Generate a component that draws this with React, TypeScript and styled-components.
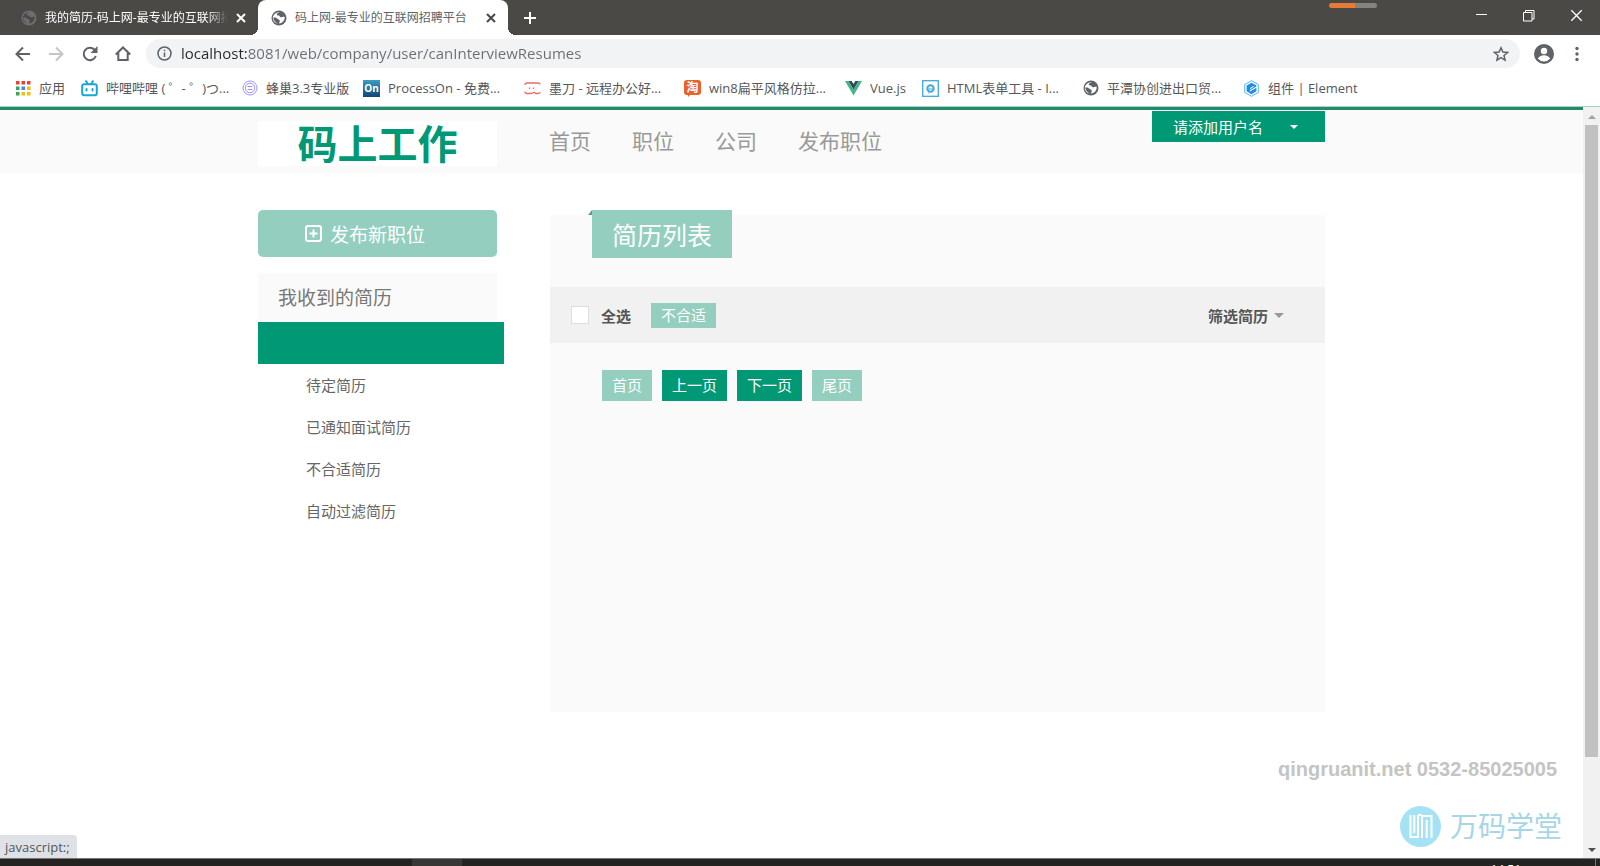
import React from 'react';
import styled, { createGlobalStyle } from 'styled-components';

const cjk = '"Open Sans", "Noto Sans CJK SC", sans-serif';
const green = '#019875';
const mint = '#93cebf';

const Global = createGlobalStyle`
  * { box-sizing: border-box; }
  html, body, #root { height: 100%; }
  body { margin: 0; font-family: ${cjk}; color: #555; background: #fff; }
  button { font: inherit; border: 0; padding: 0; background: none; color: inherit; cursor: pointer; }
  a { color: inherit; text-decoration: none; }
  h1, h2, ul { margin: 0; padding: 0; font-weight: 400; list-style: none; }
`;

const Screen = styled.div`
  display: flex;
  flex-direction: column;
  min-height: 100vh;
  position: relative;
`;
const TabStrip = styled.div`
  display: flex;
  align-items: stretch;
  height: 35px;
  background: #4b4946;
  color: #fff;
  padding-left: 8px;
`;
const Tab = styled.div<{ $active?: boolean }>`
  position: relative;
  display: flex;
  align-items: center;
  gap: 8px;
  width: 250px;
  padding: 0 12px 0 13px;
  font-size: 12px;
  line-height: 18px;
  color: ${(p) => (p.$active ? '#5f6368' : '#fff')};
  background: ${(p) => (p.$active ? '#fff' : 'transparent')};
  border-radius: 8px 8px 0 0;
  &::before, &::after {
    content: '';
    display: ${(p) => (p.$active ? 'block' : 'none')};
    position: absolute;
    bottom: 0;
    width: 8px;
    height: 8px;
  }
  &::before { left: -8px; background: radial-gradient(circle at 0 0, #4b4946 8px, #fff 8px); }
  &::after { right: -8px; background: radial-gradient(circle at 100% 0, #4b4946 8px, #fff 8px); }
`;
const TabTitle = styled.span<{ $fade?: boolean }>`
  flex: 1;
  min-width: 0;
  white-space: nowrap;
  overflow: hidden;
  mask-image: ${(p) => (p.$fade ? 'linear-gradient(90deg, #000 88%, transparent)' : 'none')};
`;
const IconButton = styled.button<{ $width: number }>`
  display: flex;
  align-items: center;
  justify-content: center;
  flex: none;
  width: ${(p) => p.$width}px;
`;
const WindowControls = styled.div`
  display: flex;
  margin-left: auto;
  height: 31px;
`;
const Recorder = styled.div`
  position: absolute;
  top: 3px;
  right: 223px;
  width: 48px;
  height: 5px;
  border-radius: 3px;
  background: linear-gradient(90deg, #e67b35 26px, #85827f 26px);
`;
const Toolbar = styled.div`
  display: flex;
  align-items: center;
  height: 37px;
  padding: 0 6px;
  color: #5f6368;
`;
const Omnibox = styled.label`
  display: flex;
  align-items: center;
  flex: 1;
  height: 29px;
  margin: 0 8px 0 6px;
  padding: 0 11px;
  gap: 9px;
  border-radius: 15px;
  background: #f1f3f4;
`;
const UrlInput = styled.input`
  flex: 1;
  min-width: 0;
  height: 24px;
  padding: 0 0 2px;
  border: 0;
  outline: 0;
  background: linear-gradient(90deg, #27292c 66px, #6a6e73 66px);
  background-clip: text;
  -webkit-background-clip: text;
  font: 15px/22px ${cjk};
  color: transparent;
  caret-color: #27292c;
`;
const Bookmarks = styled.nav`
  display: flex;
  align-items: center;
  height: 34px;
  padding: 0 0 2px 15px;
  font-size: 13px;
  line-height: 18px;
  color: #54575b;
`;
const Bookmark = styled.a<{ $width: number }>`
  display: flex;
  align-items: center;
  gap: 8px;
  flex: none;
  width: ${(p) => p.$width}px;
  white-space: nowrap;
`;
const Body = styled.div`
  display: flex;
  flex: 1;
  border-top: 1px solid #a9d3c5;
`;
const Page = styled.div`
  flex: 1;
  min-width: 0;
  border-top: 3px solid #26896c;
`;
const Header = styled.header`
  background: #fafafa;
  height: 63px;
`;
const Container = styled.div`
  display: flex;
  max-width: 1067px;
  margin: 0 auto;
`;
const Logo = styled.a`
  display: flex;
  align-items: center;
  justify-content: center;
  width: 239px;
  height: 45px;
  margin-top: 11px;
  background: #fff;
  color: ${green};
  font-size: 40px;
  line-height: 45px;
  font-weight: 700;
`;
const MainNav = styled.nav`
  display: flex;
  gap: 41px;
  margin: 15px 0 0 52px;
  font-size: 21px;
  line-height: 32px;
  color: #999;
`;
const UserButton = styled.button`
  display: flex;
  align-items: center;
  justify-content: space-between;
  width: 173px;
  height: 31px;
  margin: 1px 0 0 auto;
  padding: 0 27px 0 21px;
  background: ${green};
  color: #fff;
  font-size: 15px;
`;
const Caret = styled.i<{ $size: number; $color: string }>`
  border: ${(p) => p.$size}px solid transparent;
  border-bottom: 0;
  border-top-color: ${(p) => p.$color};
`;
const Sidebar = styled.aside`
  width: 239px;
  margin-top: 37px;
`;
const PostButton = styled.button`
  display: flex;
  align-items: center;
  gap: 8px;
  width: 100%;
  height: 47px;
  padding-left: 47px;
  border-radius: 5px;
  background: ${mint};
  color: #fff;
  font-size: 19px;
`;
const SideTitle = styled.h2`
  height: 49px;
  margin-top: 16px;
  padding-left: 20px;
  background: #fafafa;
  color: #777;
  font-size: 19px;
  line-height: 50px;
`;
const SideItem = styled.li<{ $active?: boolean }>`
  width: 246px;
  height: 42px;
  padding-left: 48px;
  background: ${(p) => (p.$active ? green : 'transparent')};
  color: #666;
  font-size: 15px;
  line-height: 42px;
`;
const Panel = styled.main`
  flex: 1;
  min-height: 497px;
  margin: 42px 0 0 53px;
  background: #fafafa;
`;
const PanelHead = styled.div`
  display: flex;
  height: 72px;
  padding-left: 42px;
`;
const Ribbon = styled.h1`
  position: relative;
  height: 48px;
  margin-top: -5px;
  padding: 0 20px;
  background: ${mint};
  color: #fff;
  font-size: 25px;
  line-height: 50px;
  &::before {
    content: '';
    position: absolute;
    left: -4px;
    top: 0;
    border-style: solid;
    border-width: 0 0 5px 4px;
    border-color: transparent transparent #5a9e8b transparent;
  }
`;
const FilterBar = styled.div`
  display: flex;
  align-items: center;
  height: 56px;
  padding: 0 41px 0 21px;
  background: #f1f1f1;
  font-size: 15px;
`;
const SelectAll = styled.label`
  display: flex;
  align-items: center;
  gap: 12px;
  font-weight: 700;
`;
const Checkbox = styled.input`
  appearance: none;
  width: 18px;
  height: 18px;
  margin: 0;
  border: 1px solid #ddd;
  background: #fff;
`;
const Reject = styled.button`
  height: 25px;
  margin-left: 20px;
  padding: 0 10px;
  background: ${mint};
  color: #fff;
  line-height: 25px;
`;
const FilterToggle = styled.button`
  display: flex;
  align-items: center;
  gap: 6px;
  margin-left: auto;
  font-weight: 700;
`;
const Pager = styled.nav`
  display: flex;
  gap: 10px;
  padding: 27px 52px;
`;
const PageLink = styled.a<{ $on?: boolean }>`
  height: 31px;
  padding: 0 10px;
  background: ${(p) => (p.$on ? green : mint)};
  color: #fff;
  font-size: 15px;
  line-height: 31px;
`;
const Scrollbar = styled.div`
  display: flex;
  flex-direction: column;
  align-items: center;
  justify-content: space-between;
  width: 17px;
  padding: 8px 0 6px;
  background: #f1f1f1;
`;
const Thumb = styled.div`
  width: 13px;
  flex: 0 1 632px;
  margin: 6px 0 auto;
  background: #c1c1c1;
`;
const Taskbar = styled.footer`
  display: flex;
  height: 8px;
  padding: 0 4px 0 412px;
  border-top: 1px solid #777;
  background: #242322;
  overflow: hidden;
`;
const TaskItem = styled.div`
  width: 50px;
  background: #383736;
`;
const Clock = styled.time`
  margin: 3px 0 0 auto;
  padding-right: 74px;
  color: #fff;
  font-size: 12px;
  line-height: 16px;
`;
const DesktopEdge = styled.div`
  width: 1px;
  background: #777;
`;
const StatusBubble = styled.div`
  position: absolute;
  left: 0;
  bottom: 8px;
  height: 23px;
  padding: 0 7px 0 5px;
  border-radius: 0 4px 0 0;
  background: #dee1e6;
  color: #54575b;
  font-size: 13px;
  line-height: 24px;
`;
const Contact = styled.div`
  position: absolute;
  right: 43px;
  bottom: 84px;
  color: #c4c4c4;
  font: 700 20px/26px "Liberation Sans", sans-serif;
`;
const Brand = styled.div`
  position: absolute;
  right: 38px;
  bottom: 19px;
  display: flex;
  align-items: center;
  gap: 9px;
  color: #a6d6e6;
  font-size: 28px;
  line-height: 42px;
`;

const Globe = ({ color = '#5f6368', land = '#fff' }: { color?: string; land?: string }) => (
  <svg width="16" height="16" viewBox="0 0 16 16">
    <circle cx="8" cy="8" r="7.5" fill={color} />
    <path d="M8.6 2.2c-1 .9-2.700.4-2.900 2-.1 1 .9 1.200 2 1.300 1.200.2.900 1.800 2.300 1.800 1.300 0 1.500-.8 3.600-.6.500 3.400-2 6.300-5.300 6.800-.5-1.200.7-1.600.5-2.800C8.600 9.300 7 9.600 6 8.500 5 7.300 3.600 7.600 2.200 7.500c.3 3 2.300 5.300 4.900 6.100C3 13.400 1.200 9.600 2 6.600 3 3.700 5.800 1.900 8.600 2.200z" fill={land} />
  </svg>
);
const Cross = ({ color, size = 10, weight = 2 }: { color: string; size?: number; weight?: number }) => (
  <svg width={size} height={size} viewBox="0 0 10 10" stroke={color} strokeWidth={weight}>
    <path d="M1 1l8 8M9 1l-8 8" />
  </svg>
);
const stroke = { fill: 'none', stroke: '#5f6368', strokeWidth: 2 } as const;

const AppsIcon = () => (
  <svg width="16" height="16" viewBox="0 0 16 16">
    {['#ea4335', '#ea4335', '#ea4335', '#34a853', '#4285f4', '#fbbc05', '#34a853', '#fbbc05', '#fbbc05'].map((c, i) => (
      <rect key={i} x={1 + (i % 3) * 5.5} y={1 + Math.floor(i / 3) * 5.5} width="3.500" height="3.500" fill={c} />
    ))}
  </svg>
);
const BiliIcon = () => (
  <svg width="17" height="17" viewBox="0 0 17 17" fill="none" stroke="#1ba4d6" strokeWidth="2" strokeLinecap="round">
    <rect x="1.200" y="4.200" width="14.600" height="11" rx="2" />
    <path d="M5 1.200L7 4M12 1.200L10 4M5.500 9v1.500M11.500 9v1.500" />
  </svg>
);
const HiveIcon = () => (
  <svg width="16" height="16" viewBox="0 0 16 16" fill="none" stroke="#9d94f5">
    <circle cx="8" cy="8" r="7" />
    <circle cx="8" cy="8" r="4.800" />
    <path d="M5.500 6.500h5M5.500 9.500h5" />
  </svg>
);
const OnIcon = () => (
  <svg width="17" height="17" viewBox="0 0 17 17">
    <defs><linearGradient id="on" x2="0" y2="1"><stop stopColor="#3a9fc4" /><stop offset="1" stopColor="#124477" /></linearGradient></defs>
    <rect width="17" height="17" fill="url(#on)" />
    <text x="8.500" y="12" textAnchor="middle" fontSize="10" fontWeight="700" fill="#fff" fontFamily="Open Sans, sans-serif">On</text>
  </svg>
);
const ModaoIcon = () => (
  <svg width="17" height="17" viewBox="0 0 17 17" fill="none" stroke="#ee6a62" strokeWidth="1.300">
    <path d="M1 5q0-2 2-2h11q2 0 2 1.500M1 11.500q0 2 2 2h3q2 0 3-.8t3 .8h2q2 0 2-1.500M5.500 7.500v1.500M9.500 7.500v1.500" />
  </svg>
);
const TaoIcon = () => (
  <svg width="17" height="17" viewBox="0 0 17 17">
    <path d="M3 0h11q3 0 3 3v9q0 3-3 3H6l-2 2v-2H3q-3 0-3-3V3q0-3 3-3z" fill="#e8622c" />
    <text x="8.500" y="12" textAnchor="middle" fontSize="12" fontWeight="700" fill="#fff" fontFamily="Noto Sans CJK SC, sans-serif">淘</text>
  </svg>
);
const VueIcon = () => (
  <svg width="17" height="16" viewBox="0 0 17 16">
    <path d="M0 1h3.500l5 8.500 5-8.500H17L8.500 15.500z" fill="#41b883" />
    <path d="M3.500 1h3.200l1.800 3 1.800-3h3.200l-5 8.500z" fill="#35495e" />
  </svg>
);
const FormIcon = () => (
  <svg width="17" height="17" viewBox="0 0 17 17" fill="none" stroke="#3fa9dd">
    <rect x=".700" y=".700" width="15.600" height="15.600" strokeWidth="1.300" />
    <circle cx="8.500" cy="8.500" r="3.200" strokeWidth="2" />
    <path d="M6 9h5M7 12.500l-.5 1" />
  </svg>
);
const ElementIcon = () => (
  <svg width="17" height="17" viewBox="0 0 17 17">
    <path d="M8.500.700l6.800 3.900v7.800l-6.800 3.900-6.800-3.900V4.600z" fill="#fff" stroke="#55b3ff" />
    <path d="M8.500 2.800l4.900 2.800v1L7 10.300v1.200l6.400-3.700v3.500l-4.900 2.900-4.900-2.900V5.600z" fill="#1c8ceb" />
    <path d="M7 8.600l4-2.300" stroke="#fff" />
  </svg>
);

const bookmarks: [React.ReactNode, string, number][] = [
  [<AppsIcon />, '应用', 66],
  [<BiliIcon />, '哔哩哔哩 ( ゜- ゜)つ...', 161],
  [<HiveIcon />, '蜂巢3.3专业版', 121],
  [<OnIcon />, 'ProcessOn - 免费...', 161],
  [<ModaoIcon />, '墨刀 - 远程办公好...', 160],
  [<TaoIcon />, 'win8扁平风格仿拉...', 161],
  [<VueIcon />, 'Vue.js', 77],
  [<FormIcon />, 'HTML表单工具 - I...', 161],
  [<Globe />, '平潭协创进出口贸...', 160],
  [<ElementIcon />, '组件 | Element', 121],
];

export default function App() {
  return (
    <Screen>
      <Global />
      <TabStrip>
        <Tab>
          <Globe color="#6d6e70" land="#4b4946" />
          <TabTitle $fade>我的简历-码上网-最专业的互联网招聘平台</TabTitle>
          <IconButton $width={10} aria-label="关闭标签页"><Cross color="#fff" /></IconButton>
        </Tab>
        <Tab $active>
          <Globe />
          <TabTitle>码上网-最专业的互联网招聘平台</TabTitle>
          <IconButton $width={10} aria-label="关闭标签页"><Cross color="#45484c" /></IconButton>
        </Tab>
        <IconButton $width={44} aria-label="新标签页">
          <svg width="14" height="14" viewBox="0 0 14 14" stroke="#fff" strokeWidth="2"><path d="M7 1v12M1 7h12" /></svg>
        </IconButton>
        <WindowControls>
          <IconButton $width={47} aria-label="最小化"><svg width="11" height="11" stroke="#fff"><path d="M0 4.500h11" /></svg></IconButton>
          <IconButton $width={47} aria-label="还原"><svg width="12" height="12" fill="none" stroke="#fff"><path d="M.5 2.500h8.500v8.500H.5zM2.500 2.500V.5h8.500V9H9" /></svg></IconButton>
          <IconButton $width={48} aria-label="关闭"><Cross color="#fff" size={13} weight={1} /></IconButton>
        </WindowControls>
        <Recorder />
      </TabStrip>
      <Toolbar>
        <IconButton $width={33} aria-label="后退"><svg width="16" height="16" viewBox="0 0 16 16" {...stroke}><path d="M15 8H2M8 1.500L1.500 8 8 14.500" /></svg></IconButton>
        <IconButton $width={34} aria-label="前进"><svg width="16" height="16" viewBox="0 0 16 16" {...stroke} stroke="#c3c5c8"><path d="M1 8h13M8 1.500L14.500 8 8 14.500" /></svg></IconButton>
        <IconButton $width={33} aria-label="刷新"><svg width="16" height="16" viewBox="0 0 16 16" {...stroke}><path d="M13.800 10A6.200 6.200 0 1 1 12.500 3.700L14 5.300" /><path d="M15.500 0v7h-7z" fill="#5f6368" stroke="none" /></svg></IconButton>
        <IconButton $width={34} aria-label="主页"><svg width="16" height="16" viewBox="0 0 16 16" {...stroke}><path d="M.8 8.500L8 1.500l7.200 7M3.300 7v7h9.400V7" /></svg></IconButton>
        <Omnibox>
          <svg width="15" height="15" viewBox="0 0 15 15" {...stroke} strokeWidth="1.500"><circle cx="7.500" cy="7.500" r="6.500" /><path d="M7.500 6.500v4.500M7.500 3.800v1.500" /></svg>
          <UrlInput aria-label="地址" defaultValue="localhost:8081/web/company/user/canInterviewResumes" />
          <svg width="16" height="16" viewBox="0 0 16 16" {...stroke} strokeWidth="1.500"><path d="M8 1.800l1.900 4.300 4.700.4-3.600 3 1.100 4.600L8 11.700l-4.100 2.400L5 9.500l-3.600-3 4.700-.4z" /></svg>
        </Omnibox>
        <IconButton $width={32} aria-label="用户">
          <svg width="20" height="20" viewBox="0 0 20 20"><circle cx="10" cy="10" r="10" fill="#5f6368" /><circle cx="10" cy="7" r="3.200" fill="#fff" /><path d="M3.800 14.500q2.500-3.300 6.200-3.300t6.200 3.300q-2.500 3-6.200 3t-6.200-3z" fill="#fff" /></svg>
        </IconButton>
        <IconButton $width={34} aria-label="菜单">
          <svg width="4" height="16" fill="#5f6368"><circle cx="2" cy="2.500" r="1.700" /><circle cx="2" cy="8" r="1.700" /><circle cx="2" cy="13.500" r="1.700" /></svg>
        </IconButton>
      </Toolbar>
      <Bookmarks>
        {bookmarks.map(([icon, label, width]) => (
          <Bookmark key={label} href="#" $width={width}>{icon}<span>{label}</span></Bookmark>
        ))}
      </Bookmarks>
      <Body>
        <Page>
          <Header>
            <Container>
              <Logo href="#">码上工作</Logo>
              <MainNav>
                <a href="#">首页</a><a href="#">职位</a><a href="#">公司</a><a href="#">发布职位</a>
              </MainNav>
              <UserButton>请添加用户名<Caret $size={4} $color="#fff" /></UserButton>
            </Container>
          </Header>
          <Container>
            <Sidebar>
              <PostButton>
                <svg width="17" height="17" viewBox="0 0 17 17" fill="none" stroke="#fff" strokeWidth="2"><rect x="1" y="1" width="15" height="15" rx="2" /><path d="M8.500 4.500v8M4.500 8.500h8" /></svg>
                发布新职位
              </PostButton>
              <SideTitle>我收到的简历</SideTitle>
              <ul>
                <SideItem $active />
                {['待定简历', '已通知面试简历', '不合适简历', '自动过滤简历'].map((t) => (
                  <SideItem key={t}><a href="#">{t}</a></SideItem>
                ))}
              </ul>
            </Sidebar>
            <Panel>
              <PanelHead><Ribbon>简历列表</Ribbon></PanelHead>
              <FilterBar>
                <SelectAll><Checkbox type="checkbox" />全选</SelectAll>
                <Reject>不合适</Reject>
                <FilterToggle>筛选简历<Caret $size={5} $color="#999" /></FilterToggle>
              </FilterBar>
              <Pager>
                <PageLink href="#">首页</PageLink>
                <PageLink href="#" $on>上一页</PageLink>
                <PageLink href="#" $on>下一页</PageLink>
                <PageLink href="#">尾页</PageLink>
              </Pager>
            </Panel>
          </Container>
        </Page>
        <Scrollbar>
          <Caret $size={4} $color="#a3a3a3" style={{ rotate: '180deg' }} />
          <Thumb />
          <Caret $size={4} $color="#505050" />
        </Scrollbar>
      </Body>
      <Taskbar><TaskItem /><Clock>14:51</Clock><DesktopEdge /></Taskbar>
      <StatusBubble>javascript:;</StatusBubble>
      <Contact>qingruanit.net 0532-85025005</Contact>
      <Brand>
        <svg width="41" height="41" viewBox="0 0 41 41"><circle cx="20.500" cy="20.500" r="20.500" fill="#a5e2f4" /><path d="M10.500 9v22H18V9M14.300 9v18M22 32V10h9.500v22M26.700 32V14M18 9h4" fill="none" stroke="#fff" strokeWidth="2" /></svg>
        万码学堂
      </Brand>
    </Screen>
  );
}
